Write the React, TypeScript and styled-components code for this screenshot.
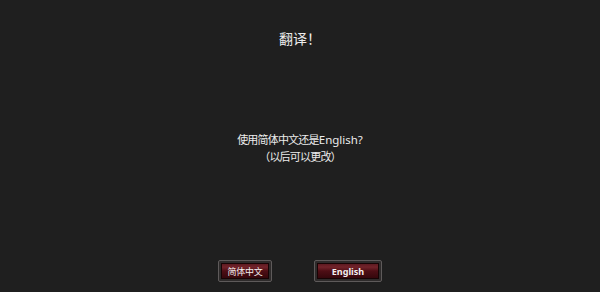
import React from 'react'
import styled, { createGlobalStyle } from 'styled-components'

const GlobalStyle = createGlobalStyle`
    html, body {
        margin: 0;
        padding: 0;
        background: #1f1f1f;
    }
    body {
        font-family: "Noto Sans", "Noto Sans CJK SC", sans-serif;
        color: #ececec;
    }
`

const Screen = styled.div`
    width: 600px;
    height: 292px;
    display: flex;
    flex-direction: column;
    align-items: center;
    background: #1f1f1f;
    box-sizing: border-box;
    padding-top: 29px;
    padding-bottom: 10px;
`

const Title = styled.h1`
    margin: 0;
    font-family: "Noto Sans CJK SC", sans-serif;
    font-size: 14px;
    line-height: 18px;
    font-weight: 400;
`

const Question = styled.div`
    margin-top: 84px;
    display: flex;
    flex-direction: column;
    align-items: center;
    font-size: 11.5px;
    line-height: 17px;
`

const Cjk = styled.span`
    font-family: "Noto Sans CJK SC", sans-serif;
    font-size: 11px;
    letter-spacing: -0.8px;
`

const ButtonRow = styled.div`
    margin-top: auto;
    display: flex;
    gap: 42px;
`

const LangButton = styled.button<{ $w: number }>`
    width: ${p => p.$w}px;
    height: 22px;
    box-sizing: border-box;
    padding: 2px;
    border: 1px solid #5e5a5a;
    border-radius: 2px;
    background: #2e2b2b;
    cursor: pointer;
    display: flex;
`

const ButtonFace = styled.span<{ $cjk?: boolean }>`
    flex: 1;
    display: flex;
    align-items: center;
    justify-content: center;
    border: 1px solid #170405;
    background: linear-gradient(to bottom, #5e1a21 0%, #72232a 22%, #4e0e15 50%, #35070c 100%);
    color: #f4f0f0;
    font-family: ${p => p.$cjk ? '"Noto Sans CJK SC", sans-serif' : '"Noto Sans", sans-serif'};
    font-size: 9px;
    font-weight: ${p => p.$cjk ? 400 : 700};
    letter-spacing: ${p => p.$cjk ? '-0.2px' : '0'};
`

function App() {
    return (
        <>
            <GlobalStyle />
            <Screen>
                <Title>翻译！</Title>
                <Question>
                    <span><Cjk>使用简体中文还是</Cjk>English?</span>
                    <Cjk>（以后可以更改）</Cjk>
                </Question>
                <ButtonRow>
                    <LangButton $w={54}>
                        <ButtonFace $cjk>简体中文</ButtonFace>
                    </LangButton>
                    <LangButton $w={68}>
                        <ButtonFace>English</ButtonFace>
                    </LangButton>
                </ButtonRow>
            </Screen>
        </>
    )
}

export default App
